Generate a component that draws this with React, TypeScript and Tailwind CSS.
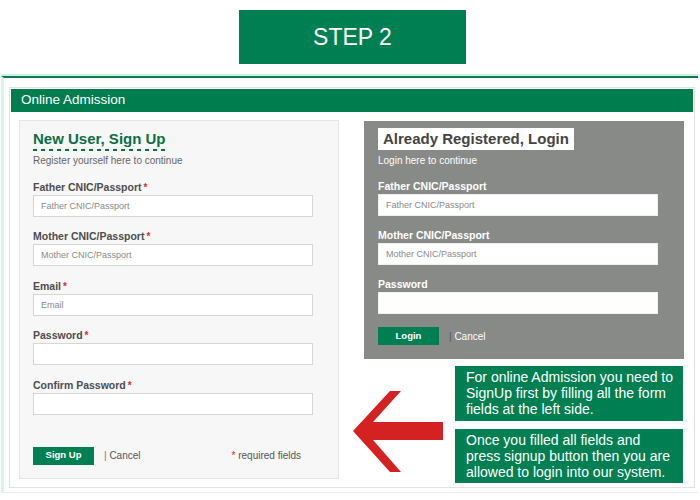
import React from 'react';

const font = { fontFamily: '"Liberation Sans", Arial, sans-serif' };

interface FieldProps {
  label: string;
  placeholder?: string;
  type?: string;
  required?: boolean;
  dark?: boolean;
}

function Field({ label, placeholder, type = 'text', required, dark }: FieldProps) {
  return (
    <div className={dark ? 'mt-[13px]' : 'mt-[13.5px]'}>
      <div className={`h-[13px] leading-[13px] text-[10.5px] font-bold ${dark ? 'text-white' : 'text-[#4d4d4d]'}`}>
        {label}
        {required && <span className="ml-[2px] text-[10px] text-[#e3262b]">*</span>}
      </div>
      <input
        readOnly
        type={type}
        placeholder={placeholder}
        className={`mt-[1px] block h-[22px] w-[280px] bg-white px-[7px] text-[9px] text-[#333] outline-none placeholder:text-[#8a8a8a] border ${dark ? 'border-[#f0f0f0]' : 'border-[#d6d6d6]'}`}
      />
    </div>
  );
}

function Arrow() {
  return (
    <svg width="90" height="82" viewBox="0 0 90 82" className="ml-[-11px] mt-[25px] shrink-0">
      <polygon
        points="0,40 37,0 48,0 20,31 90,31 90,49 20,49 48,81 37,81"
        fill="#d42121"
      />
    </svg>
  );
}

export default function App() {
  return (
    <div className="h-[500px] w-[700px] overflow-hidden bg-white" style={font}>
      <div className="pl-[239px] pt-[10px]">
        <div className="flex h-[54px] w-[227px] items-center justify-center bg-[#008052] text-[23px] text-white">
          STEP 2
        </div>
      </div>

      <div className="ml-[1px] mr-[2px] mt-[10px] border-t-2 border-[#c9f2e4]">
        <div className="border-b border-l-[3px] border-t-2 border-b-[#ececec] border-l-[#d6f5ea] border-t-[#0b7a4c] pb-[4px] pl-[5px] pr-[3px] pt-[9px]">
          <div className="border border-[#e3e3e3] p-px">
            <div className="flex h-[23px] items-center bg-[#007d4f] pl-[10px] text-[13.5px] text-white">
              Online Admission
            </div>

            <div className="flex items-start pb-[3px] pl-[8px] pt-[8px]">
              {/* sign up */}
              <div className="w-[320px] border border-[#e4e4e4] bg-[#f7f7f7] pb-[13px] pl-[13px] pt-[9px]">
                <div className="w-fit">
                  <div className="text-[15px] font-bold leading-[17px] text-[#0d6e45]">New User, Sign Up</div>
                  <div className="mt-[2px] h-[2px] bg-[repeating-linear-gradient(to_right,#0d6e45_0_4px,transparent_4px_8px)]" />
                </div>
                <div className="mt-[3px] text-[10px] leading-[13px] text-[#666]">Register yourself here to continue</div>

                <Field label="Father CNIC/Passport" placeholder="Father CNIC/Passport" required />
                <Field label="Mother CNIC/Passport" placeholder="Mother CNIC/Passport" required />
                <Field label="Email" placeholder="Email" required />
                <Field label="Password" type="password" required />
                <Field label="Confirm Password" type="password" required />

                <div className="mt-[32px] flex w-[280px] items-center pr-[12px]">
                  <button className="h-[18px] w-[61px] bg-[#008052] text-[9.5px] font-bold text-white">Sign Up</button>
                  <span className="ml-[10px] text-[10px] text-[#555]">
                    <span className="text-[#777]">|</span> Cancel
                  </span>
                  <span className="ml-auto text-[10px] text-[#555]">
                    <span className="text-[#e3262b]">*</span> required fields
                  </span>
                </div>
              </div>

              {/* login + notes */}
              <div className="ml-[25px] w-[320px]">
                <div className="mt-px bg-[#878a87] pb-[14px] pl-[14px] pt-[7px]">
                  <div className="h-[22px] w-fit bg-white px-[5px] text-[15px] font-bold leading-[22px] text-[#444]">
                    Already Registered, Login
                  </div>
                  <div className="mt-[4px] text-[10px] leading-[13px] text-white">Login here to continue</div>

                  <Field label="Father CNIC/Passport" placeholder="Father CNIC/Passport" dark />
                  <Field label="Mother CNIC/Passport" placeholder="Mother CNIC/Passport" dark />
                  <Field label="Password" type="password" dark />

                  <div className="mt-[13px] flex items-center">
                    <button className="h-[18px] w-[61px] bg-[#008052] text-[9.5px] font-bold text-white">Login</button>
                    <span className="ml-[10px] text-[10px] text-white">
                      <span className="text-[#555]">|</span> Cancel
                    </span>
                  </div>
                </div>

                <div className="mt-[7px] flex items-start">
                  <Arrow />
                  <div className="ml-[12px] w-[228px]">
                    <div className="h-[55px] whitespace-nowrap bg-[#008052] pl-[11px] pt-[3px] text-[14px] leading-[16px] text-white">
                      For online Admission you need to
                      <br />
                      SignUp first by filling all the form
                      <br />
                      fields at the left side.
                    </div>
                    <div className="mt-[8px] h-[54px] whitespace-nowrap bg-[#008052] pl-[11px] pt-[3px] text-[14px] leading-[16px] text-white">
                      Once you filled all fields and
                      <br />
                      press signup button then you are
                      <br />
                      allowed to login into our system.
                    </div>
                  </div>
                </div>
              </div>
            </div>
          </div>
        </div>
      </div>
    </div>
  );
}
